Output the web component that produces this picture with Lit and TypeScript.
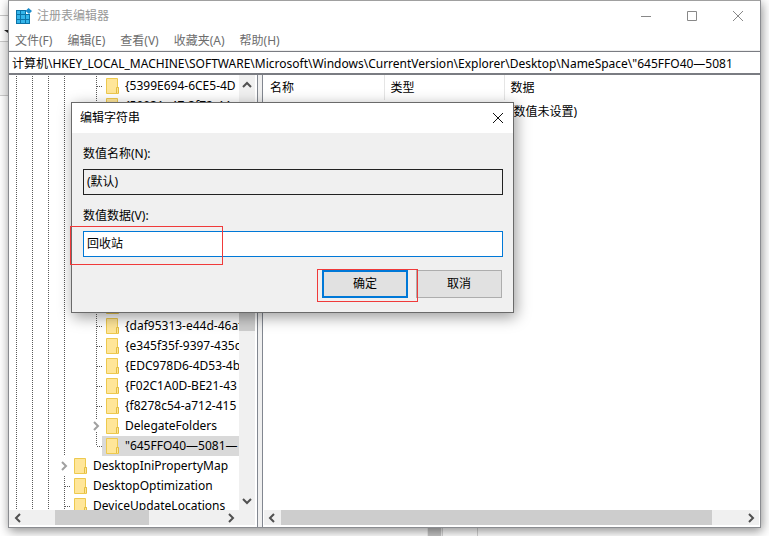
import { LitElement, html, css, svg } from "lit";
import { customElement, property, state } from "lit/decorators.js";
import { classMap } from "lit/directives/class-map.js";

interface TreeItem {
  name: string;
  nested: boolean;
  expandable?: boolean;
  selected?: boolean;
  last?: boolean;
}

const ITEMS: TreeItem[] = [
  { name: "{5399E694-6CE5-4D", nested: true },
  { name: "{59031a47-3f72-44", nested: true },
  { name: "{645FF040-5081-10", nested: true },
  { name: "{89D83576-6BD1-4c", nested: true },
  { name: "{8FD8B88D-30E1-4F", nested: true },
  { name: "{9343812e-1c37-4a", nested: true },
  { name: "{98F275B4-4FFF-11", nested: true },
  { name: "{a00ee528-ebd9-48", nested: true },
  { name: "{B4FB3F98-C1EA-42", nested: true },
  { name: "{B5947D7F-B489-4F", nested: true },
  { name: "{BD7A2E7B-21CB-41", nested: true },
  { name: "{D20EA4E1-3957-11", nested: true },
  { name: "{daf95313-e44d-46af", nested: true },
  { name: "{e345f35f-9397-435c", nested: true },
  { name: "{EDC978D6-4D53-4b2f", nested: true },
  { name: "{F02C1A0D-BE21-43", nested: true },
  { name: "{f8278c54-a712-415", nested: true },
  { name: "DelegateFolders", nested: true, expandable: true },
  { name: "\"645FFO40—5081—", nested: true, selected: true, last: true },
  { name: "DesktopIniPropertyMap", nested: false, expandable: true },
  { name: "DesktopOptimization", nested: false },
  { name: "DeviceUpdateLocations", nested: false },
];

const CHEVRONS: Record<string, string> = {
  left: "M10 4 L6 8 L10 12",
  right: "M6 4 L10 8 L6 12",
  up: "M4 10 L8 6 L12 10",
  down: "M4 6 L8 10 L12 6",
};

const chevron = (dir: string) => html`<svg width="16" height="16" viewBox="0 0 16 16">
  ${svg`<path d=${CHEVRONS[dir]} fill="none" stroke="#505050" stroke-width="2"/>`}
</svg>`;

const baseText = css`
  :host {
    font-family: "Noto Sans", "Noto Sans CJK SC", sans-serif;
    font-size: 12px;
    line-height: 20px;
    color: #000;
  }
  * {
    box-sizing: border-box;
  }
  svg {
    display: block;
    flex: none;
  }
`;

@customElement("scroll-bar")
class ScrollBar extends LitElement {
  @property({ type: Boolean, reflect: true }) vertical = false;
  @property({ type: Number }) before = 0;
  @property({ type: Number }) size = 1;
  @property({ type: Number }) after = 0;

  static styles = css`
    :host {
      display: flex;
      height: 15px;
      background: #f0f0f0;
      align-items: stretch;
      overflow: hidden;
    }
    :host([vertical]) {
      flex-direction: column;
      height: auto;
      width: 16px;
      padding: 2px 0 1px;
    }
    .thumb {
      background: #cdcdcd;
    }
    svg {
      display: block;
      flex: none;
    }
  `;

  render() {
    return html`${chevron(this.vertical ? "up" : "left")}
      <div style="flex:${this.before}"></div>
      <div class="thumb" style="flex:${this.size}"></div>
      <div style="flex:${this.after}"></div>
      ${chevron(this.vertical ? "down" : "right")}`;
  }
}

@customElement("key-tree")
class KeyTree extends LitElement {
  static styles = [
    baseText,
    css`
      :host {
        display: block;
        overflow: hidden;
      }
      ul {
        list-style: none;
        margin: 0;
        padding: 1px 0 0;
      }
      li {
        display: flex;
        height: 20px;
        white-space: nowrap;
      }
      .cell {
        flex: none;
        width: 16px;
        height: 20px;
      }
      .elbow {
        width: 13px;
      }
      .label {
        display: flex;
        flex: 1;
        align-items: center;
        padding-left: 4px;
        gap: 6px;
      }
      .selected {
        background: #d9d9d9;
      }
    `,
  ];

  private line(show: boolean) {
    return html`<svg class="cell" width="16" height="20">
      ${show ? svg`<path d="M7.5 0V20" stroke="#5a5a5a" stroke-dasharray="1 1"/>` : ""}
    </svg>`;
  }

  private elbow(item: TreeItem) {
    if (item.expandable) {
      return html`<svg class="cell elbow" width="13" height="20">
        ${item.nested ? svg`<path d="M7.5 0V4M7.5 16V20" stroke="#5a5a5a" stroke-dasharray="1 1"/>` : ""}
        <path d="M5 6 L9 10 L5 14" fill="none" stroke="#a0a0a0" stroke-width="2" />
      </svg>`;
    }
    return html`<svg class="cell elbow" width="13" height="20">
      <path d=${item.last ? "M7.5 0V10M8 10.5H13" : "M7.5 0V20M8 10.5H13"} fill="none" stroke="#5a5a5a" stroke-dasharray="1 1" />
    </svg>`;
  }

  render() {
    return html`<ul>
      ${ITEMS.map(
        (item) => html`<li>
          ${[0, 1, 2].map(() => this.line(true))}
          ${item.nested ? [this.line(true), this.line(false)] : ""}
          ${this.elbow(item)}
          <span class=${classMap({ label: true, selected: !!item.selected })}>
            <svg width="13" height="16" viewBox="0 0 13 16">
              <path d="M.5 .5H11.5V9.5H12.5V15.5H.5Z" fill="#ffe699" stroke="#edc94f" />
              <path d="M10.5 15V9.5H12.5V15" fill="#ffe699" stroke="#e4be42" />
            </svg>
            <span>${item.name}</span>
          </span>
        </li>`
      )}
    </ul>`;
  }
}

@customElement("edit-dialog")
class EditDialog extends LitElement {
  @state() private value = "回收站";

  static styles = [
    baseText,
    css`
      :host {
        display: block;
        background: #f0f0f0;
        border: 1px solid #6a6a6a;
        box-shadow: 2px 4px 14px rgba(0, 0, 0, 0.4);
      }
      header {
        display: flex;
        justify-content: space-between;
        align-items: center;
        height: 30px;
        background: #fff;
        padding: 0 9px 0 8px;
      }
      h1 {
        font: inherit;
        margin: 0;
      }
      button,
      input {
        font: inherit;
        color: inherit;
        border-radius: 0;
        outline: none;
      }
      .close {
        border: 0;
        padding: 0;
        background: none;
      }
      form {
        display: flex;
        flex-direction: column;
        padding: 11px 10px 14px 11px;
      }
      label {
        height: 25px;
      }
      input {
        height: 26px;
        padding: 0 4px 2px 3px;
        border: 1px solid #222;
        background: #f0f0f0;
        margin-bottom: 11px;
        width: 100%;
      }
      .value {
        border-color: #0078d7;
        background: #fff;
        margin-bottom: 13px;
      }
      .actions {
        display: flex;
        justify-content: flex-end;
        gap: 8px;
        padding-right: 1px;
      }
      .actions button {
        width: 86px;
        height: 28px;
        padding: 0;
        background: #e1e1e1;
        border: 1px solid #adadad;
      }
      .actions .ok {
        border: 2px solid #0078d7;
      }
      .mark {
        position: absolute;
        border: 1px solid #f03a3a;
        pointer-events: none;
      }
      .mark-value {
        left: -2px;
        top: 123px;
        width: 153px;
        height: 39px;
      }
      .mark-ok {
        right: 95px;
        bottom: 10px;
        width: 101px;
        height: 33px;
      }
    `,
  ];

  render() {
    return html`
      <header>
        <h1>编辑字符串</h1>
        <button class="close" aria-label="关闭">
          <svg width="12" height="12"><path d="M1 1L11 11M11 1L1 11" stroke="#111" /></svg>
        </button>
      </header>
      <form @submit=${(e: Event) => e.preventDefault()}>
        <label for="name">数值名称(N):</label>
        <input id="name" readonly .value=${"(默认)"} />
        <label for="value">数值数据(V):</label>
        <input
          id="value"
          class="value"
          .value=${this.value}
          @input=${(e: InputEvent) => (this.value = (e.target as HTMLInputElement).value)}
        />
        <div class="actions">
          <button class="ok" type="submit">确定</button>
          <button type="button">取消</button>
        </div>
      </form>
      <div class="mark mark-value"></div>
      <div class="mark mark-ok"></div>
    `;
  }
}

@customElement("app-root")
class AppRoot extends LitElement {
  static styles = [
    baseText,
    css`
      :host {
        display: grid;
        grid-template-columns: 8px minmax(0, 1fr) 8px;
        grid-template-rows: minmax(0, 1fr) 8px;
        height: 100vh;
        background: #fff;
        overflow: hidden;
      }
      .behind-left {
        display: flex;
        flex-direction: column;
        grid-area: 1 / 1;
        padding-top: 15px;
      }
      .behind-box {
        height: 27px;
        border: solid #c8c8c8;
        border-width: 1px 0;
        padding: 13px 0 0 4px;
      }
      .behind-fill {
        height: 54px;
        background: #f3f3f3;
        border-bottom: 1px solid #ccc;
      }
      .behind-bottom {
        grid-area: 2 / 2;
        display: flex;
        padding-left: 419px;
      }
      .thumb-end {
        width: 15px;
        background: #c4c4c4;
        border: solid #eee;
        border-width: 0 1px;
      }
      .rule {
        width: 36px;
        border: solid #d4d4d4;
        border-width: 0 1px;
      }
      .window {
        grid-area: 1 / 2;
        position: relative;
        display: flex;
        flex-direction: column;
        background: #fff;
        border: 1px solid #8a8c90;
        border-top-color: #a0a0a0;
        box-shadow: 1px 3px 10px rgba(0, 0, 0, 0.45);
      }
      .title {
        display: flex;
        align-items: center;
        height: 29px;
        padding: 0 17px 0 7px;
        gap: 5px;
        color: #999;
      }
      h1 {
        font: inherit;
        margin: 0;
        flex: 1;
      }
      .controls {
        display: flex;
        gap: 36px;
      }
      button {
        border: 0;
        padding: 0;
        background: none;
        font: inherit;
        color: inherit;
      }
      nav {
        display: flex;
        height: 21px;
        padding: 1px 0 0 6px;
        gap: 15px;
        color: #6d6d6d;
        border-bottom: 1px solid #eee;
      }
      .address {
        height: 24px;
        flex: none;
        width: 100%;
        font: inherit;
        color: inherit;
        padding: 0 3px;
        border: 1px solid #7a7c82;
        border-bottom-width: 2px;
        border-left: 0;
        border-right: 0;
        border-radius: 0;
        outline: none;
        background: #fff;
      }
      .panes {
        flex: 1;
        min-height: 0;
        display: grid;
        grid-template-columns: 249px minmax(0, 1fr);
        gap: 4px;
        background: #f0f0f0;
      }
      .pane {
        display: flex;
        flex-direction: column;
        min-width: 0;
        min-height: 0;
        background: #fff;
        padding: 0 2px 2px 0;
      }
      .pane.tree {
        border-right: 1px solid #828790;
      }
      .pane.list {
        border-left: 1px solid #828790;
        padding: 0 1px 2px;
      }
      .tree-body {
        flex: 1;
        min-height: 0;
        display: flex;
      }
      .tree-foot {
        background: #f0f0f0;
        padding: 0 16px 0 1px;
      }
      key-tree {
        flex: 1;
        min-width: 0;
      }
      .table-area {
        flex: 1;
        min-height: 0;
        overflow: hidden;
      }
      table {
        border-collapse: collapse;
        table-layout: fixed;
        width: 100%;
      }
      th,
      td {
        font-weight: 400;
        text-align: left;
        padding: 0 6px;
        height: 24px;
      }
      th {
        height: 25px;
        border-right: 1px solid #e5e5e5;
      }
      th:last-child {
        border-right: 0;
      }
      .c {
        width: 120px;
      }
      .dialog {
        position: absolute;
        left: 62px;
        top: 101px;
        width: 443px;
      }
      edit-dialog {
        position: relative;
      }
    `,
  ];

  render() {
    return html`
      <div class="behind-left">
        <div class="behind-box">
          <svg width="4" height="6"><path d="M0 1H4V4Z" fill="#222" /></svg>
        </div>
        <div class="behind-fill"></div>
      </div>
      <div class="behind-bottom">
        <div class="thumb-end"></div>
        <div class="rule"></div>
      </div>
      <main class="window">
        <div class="title">
          <svg width="16" height="16" viewBox="0 0 16 16">
            <path d="M0 2H10V6H14V16H0Z" fill="#0b73a8" />
            <path d="M1 3H4V6H1ZM5 3H9V6H5ZM1 7H4V11H1ZM5 7H9V11H5ZM10 7H13V11H10ZM1 12H4V15H1ZM5 12H9V15H5ZM10 12H13V15H10Z" fill="#35b5ea" />
            <path d="M12.500 0L16 3L13 6L9.500 3Z" fill="#1a8ccc" />
          </svg>
          <h1>注册表编辑器</h1>
          <div class="controls">
            <button aria-label="最小化"><svg width="10" height="10"><path d="M0 5.500H10" stroke="#888" /></svg></button>
            <button aria-label="最大化"><svg width="10" height="10"><path d="M.5 .5H9.500V9.500H.5Z" fill="none" stroke="#888" /></svg></button>
            <button aria-label="关闭"><svg width="10" height="10"><path d="M0 0L10 10M10 0L0 10" stroke="#888" /></svg></button>
          </div>
        </div>
        <nav>
          ${["文件(F)", "编辑(E)", "查看(V)", "收藏夹(A)", "帮助(H)"].map((m) => html`<button>${m}</button>`)}
        </nav>
        <input
          class="address"
          aria-label="地址"
          .value=${'计算机\\HKEY_LOCAL_MACHINE\\SOFTWARE\\Microsoft\\Windows\\CurrentVersion\\Explorer\\Desktop\\NameSpace\\"645FFO40—5081'}
        />
        <div class="panes">
          <div class="pane tree">
            <div class="tree-body">
              <key-tree></key-tree>
              <scroll-bar vertical .before=${200} .size=${38} .after=${162}></scroll-bar>
            </div>
            <div class="tree-foot">
              <scroll-bar .before=${29} .size=${94} .after=${74}></scroll-bar>
            </div>
          </div>
          <div class="pane list">
            <div class="table-area">
              <table>
                <thead>
                  <tr><th class="c">名称</th><th class="c">类型</th><th>数据</th></tr>
                </thead>
                <tbody>
                  <tr><td>(默认)</td><td>REG_SZ</td><td>(数值未设置)</td></tr>
                </tbody>
              </table>
            </div>
            <scroll-bar .before=${1} .size=${432} .after=${31}></scroll-bar>
          </div>
        </div>
        <div class="dialog"><edit-dialog></edit-dialog></div>
      </main>
    `;
  }
}
